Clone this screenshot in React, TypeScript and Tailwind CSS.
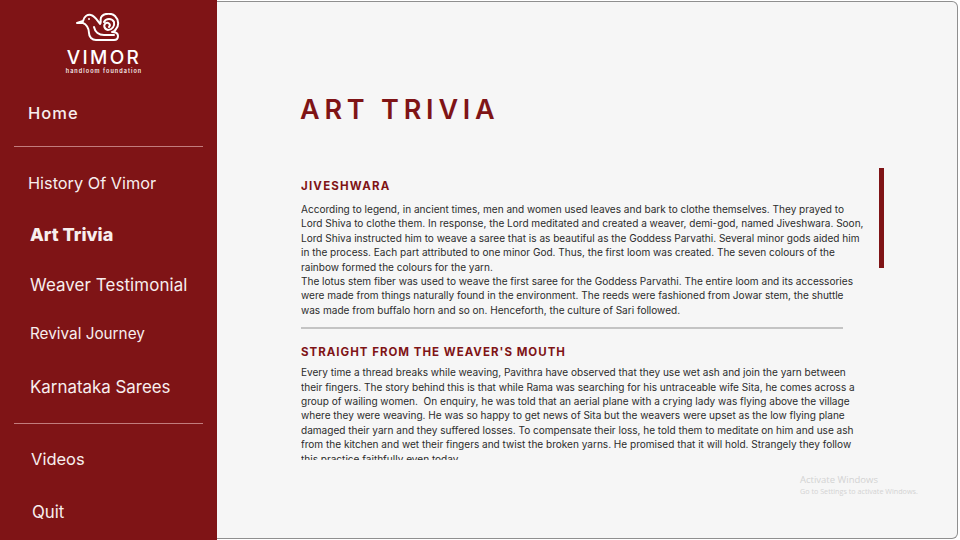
const topLinks = [
  { label: 'History Of Vimor', cls: 'h-[51px] pl-[28px] text-[16.3px]' },
  { label: 'Art Trivia', cls: 'h-[51px] pl-[30px] text-[18px] font-extrabold' },
  { label: 'Weaver Testimonial', cls: 'h-[51px] pl-[30px] text-[16.9px] tracking-[0.1px]' },
  { label: 'Revival Journey', cls: 'h-[46px] pl-[30px] text-[15.3px]' },
  { label: 'Karnataka Sarees', cls: 'h-[60px] pt-[1px] pl-[30px] text-[16.9px]' },
];

const jiveshwara = [
  'According to legend, in ancient times, men and women used leaves and bark to clothe themselves. They prayed to',
  'Lord Shiva to clothe them. In response, the Lord meditated and created a weaver, demi-god, named Jiveshwara. Soon,',
  'Lord Shiva instructed him to weave a saree that is as beautiful as the Goddess Parvathi. Several minor gods aided him',
  'in the process. Each part attributed to one minor God. Thus, the first loom was created. The seven colours of the',
  'rainbow formed the colours for the yarn.',
  'The lotus stem fiber was used to weave the first saree for the Goddess Parvathi. The entire loom and its accessories',
  'were made from things naturally found in the environment. The reeds were fashioned from Jowar stem, the shuttle',
  'was made from buffalo horn and so on. Henceforth, the culture of Sari followed.',
];

const weaver = [
  'Every time a thread breaks while weaving, Pavithra have observed that they use wet ash and join the yarn between',
  'their fingers. The story behind this is that while Rama was searching for his untraceable wife Sita, he comes across a',
  'group of wailing women.  On enquiry, he was told that an aerial plane with a crying lady was flying above the village',
  'where they were weaving. He was so happy to get news of Sita but the weavers were upset as the low flying plane',
  'damaged their yarn and they suffered losses. To compensate their loss, he told them to meditate on him and use ash',
  'from the kitchen and wet their fingers and twist the broken yarns. He promised that it will hold. Strangely they follow',
  'this practice faithfully even today.',
];

function Logo() {
  return (
    <svg className="mr-[12px]" width="44" height="28" viewBox="0 0 44 28" fill="none" stroke="white" strokeWidth="2" strokeLinecap="round" strokeLinejoin="round">
      <path d="M1 10 L7 8 C8 3 12 1 15 2 C19 3 21 7 24 11 C26 9 23 6 26 3 C29 0 36 0 39 3 C43 7 43 13 40 16 C39 18 37 19 36 19 C39 19 42 20 42 23 C42 26 40 27 38 27 L20 27 C16 27 13 24 13 20 C13 15 10 11 7 10 Z" />
      <path d="M18 14 C19 19 23 22 28 22 L38 22" />
      <path d="M28 9 C30 5 36 5 38 9 C39 13 36 17 32 17 C28 16 27 12 30 10 C33 9 35 12 33 14" />
      <circle cx="13" cy="6" r="1" fill="white" stroke="none" />
    </svg>
  );
}

function Sidebar() {
  return (
    <aside className="flex h-full w-[217px] shrink-0 flex-col bg-[#7f1416] text-[#f7eeee]">
      <div className="flex h-[90px] flex-col items-center pr-[9px] pt-[13px]">
        <Logo />
        <div className="mt-[8px] text-[19px] font-medium leading-[17px] tracking-[2.3px] text-white">VIMOR</div>
        <div className="mt-[2px] text-[5.5px] font-semibold leading-[7px] tracking-[1.05px]">handloom foundation</div>
      </div>
      <div className="flex h-[46px] items-center pl-[28px] text-[16.5px] font-medium tracking-[1px]">Home</div>
      <div className="mx-[14px] mt-[10px] h-px bg-[#c27c7d]" />
      <nav className="flex flex-col pt-[11px]">
        {topLinks.map((link) => (
          <a key={link.label} className={`flex items-center ${link.cls}`}>{link.label}</a>
        ))}
      </nav>
      <div className="mx-[14px] mt-[6px] h-px bg-[#c27c7d]" />
      <div className="flex h-[70px] items-center pl-[31px] text-[16.5px]">Videos</div>
      <div className="flex h-[34px] items-center pl-[32px] pt-[4px] text-[16.8px]">Quit</div>
    </aside>
  );
}

function Section({ title, lines, titleCls, gapCls }: { title: string; lines: string[]; titleCls: string; gapCls: string }) {
  return (
    <section>
      <h2 className={`whitespace-nowrap text-[11.5px] font-bold leading-[16px] text-[#7f1416] ${titleCls}`}>{title}</h2>
      <div className={`whitespace-pre text-[10.05px] leading-[14.4px] text-[#2c2c2c] ${gapCls}`}>
        {lines.map((line) => (
          <div key={line}>{line}</div>
        ))}
      </div>
    </section>
  );
}

export default function App() {
  return (
    <div className="flex h-[540px] w-[960px] overflow-hidden bg-white font-['Inter',sans-serif]">
      <Sidebar />
      <main className="relative mb-px mr-[2px] mt-px flex-1 rounded-r-[6px] border-y border-r border-[#8f8f8f] bg-[#f6f6f6] pl-[83px]">
        <h1 className="pt-[91px] text-[27px] font-semibold leading-[34px] tracking-[4.8px] text-[#7f1416]">ART TRIVIA</h1>
        <div className="mt-[49px] flex">
          <div className="ml-px h-[284px] w-[570px] overflow-hidden">
            <div className="pt-[2px]">
              <Section title="JIVESHWARA" lines={jiveshwara} titleCls="tracking-[1.2px]" gapCls="mt-[8px]" />
            </div>
            <div className="mt-[10px] h-[2px] w-[542px] bg-[#c4c4c4]" />
            <div className="mt-[15px]">
              <Section title="STRAIGHT FROM THE WEAVER'S MOUTH" lines={weaver} titleCls="tracking-[1px]" gapCls="mt-[5px]" />
            </div>
          </div>
          <div className="ml-[8px] mt-[-8px] h-[100px] w-[5px] bg-[#7f1416]" />
        </div>
        <div className="absolute left-[583px] top-[471px] font-['Open_Sans',sans-serif] text-[#d3d3d3]">
          <div className="text-[9.5px] leading-[13px]">Activate Windows</div>
          <div className="text-[7.2px] leading-[11px]">Go to Settings to activate Windows.</div>
        </div>
      </main>
    </div>
  );
}
